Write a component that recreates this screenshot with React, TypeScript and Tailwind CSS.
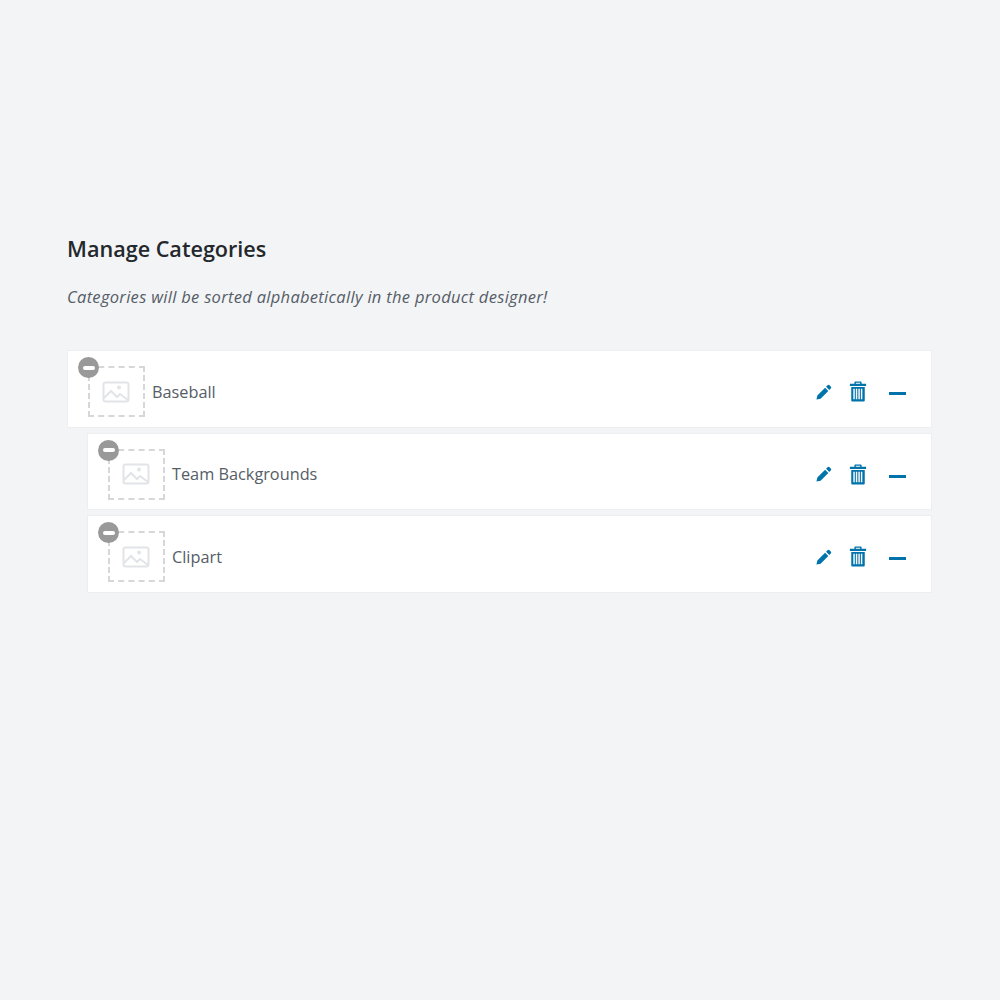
import React from 'react';

const FONT = "font-['Open_Sans','Noto_Sans',sans-serif]";

const CATEGORIES = [
	{ id: 1, name: 'Baseball', child: false },
	{ id: 2, name: 'Team Backgrounds', child: true },
	{ id: 3, name: 'Clipart', child: true },
];

function ImagePlaceholder() {
	return (
		<svg width="28" height="22" viewBox="0 0 28 22" fill="none" stroke="#e2e4e7" strokeWidth="2" className="-ml-px">
			<rect x="1.5" y="1.5" width="25" height="19" rx="2" />
			<path d="M2 17l7-7 6 6 3-3 8 6" />
			<circle cx="17" cy="6.5" r="2" fill="#e2e4e7" stroke="none" />
		</svg>
	);
}

function PencilIcon() {
	return (
		<svg width="18" height="18" viewBox="0 0 20 20" fill="#0073aa">
			<path d="M13.9 2.6a1.6 1.6 0 0 1 2.3 0l1.3 1.3a1.6 1.6 0 0 1 0 2.3l-1.6 1.6-3.6-3.6zM11.2 5.3l3.6 3.6-8.6 8.5-4.6 1 1-4.600z" />
		</svg>
	);
}

function TrashIcon() {
	return (
		<svg width="18" height="21" viewBox="0 0 20 22" fill="#0073aa">
			<path d="M7 0h6a1 1 0 0 1 1 1v1.5h5V5H1V2.500h5V1a1 1 0 0 1 1-1zm.6 1.300v1.200h4.800V1.300z" />
			<path fillRule="evenodd" d="M2.500 6h15v15a1 1 0 0 1-1 1h-13a1 1 0 0 1-1-1zm2.300 2v11.500h1.600V8zm2.800 0v11.500h1.600V8zm2.800 0v11.500h1.600V8zm2.800 0v11.500h1.600V8z" />
		</svg>
	);
}

function CategoryRow({ name, child }: { name: string; child: boolean }) {
	return (
		<div className={`h-[77.500px] bg-white border border-[#eceef0] flex items-center pt-[6px] pl-5 pr-[25px] ${child ? 'ml-5' : ''}`}>
			<div className="relative w-[57px] h-[51px] border-2 border-dashed border-[#d6d7d9] flex items-center justify-center shrink-0">
				<ImagePlaceholder />
				<span className="absolute -left-[12px] -top-[11px] w-[21px] h-[21px] rounded-full bg-[#999] flex items-center justify-center">
					<span className="w-[12px] h-[4px] bg-white rounded-sm" />
				</span>
			</div>
			<span className="ml-[7px] text-[16.300px] text-[#555d66]">{name}</span>
			<div className="ml-auto flex items-center">
				<PencilIcon />
				<span className="ml-[16px] flex"><TrashIcon /></span>
				<span className="ml-[22px] mt-[4px] w-[17px] h-[3px] bg-[#0073aa]" />
			</div>
		</div>
	);
}

export default function App() {
	return (
		<div className={`min-h-screen bg-[#f3f4f6] pt-[234px] pl-[67px] pr-[68px] ${FONT}`}>
			<h2 className="text-[21.600px] leading-[29px] font-semibold text-[#23282d]">Manage Categories</h2>
			<p className="mt-[23px] text-[16.500px] leading-[22px] tracking-[0.3px] italic text-[#555d66]">
				Categories will be sorted alphabetically in the product designer!
			</p>
			<div className="mt-[42px] flex flex-col gap-[5px]">
				{CATEGORIES.map((c) => (
					<CategoryRow key={c.id} name={c.name} child={c.child} />
				))}
			</div>
		</div>
	);
}
